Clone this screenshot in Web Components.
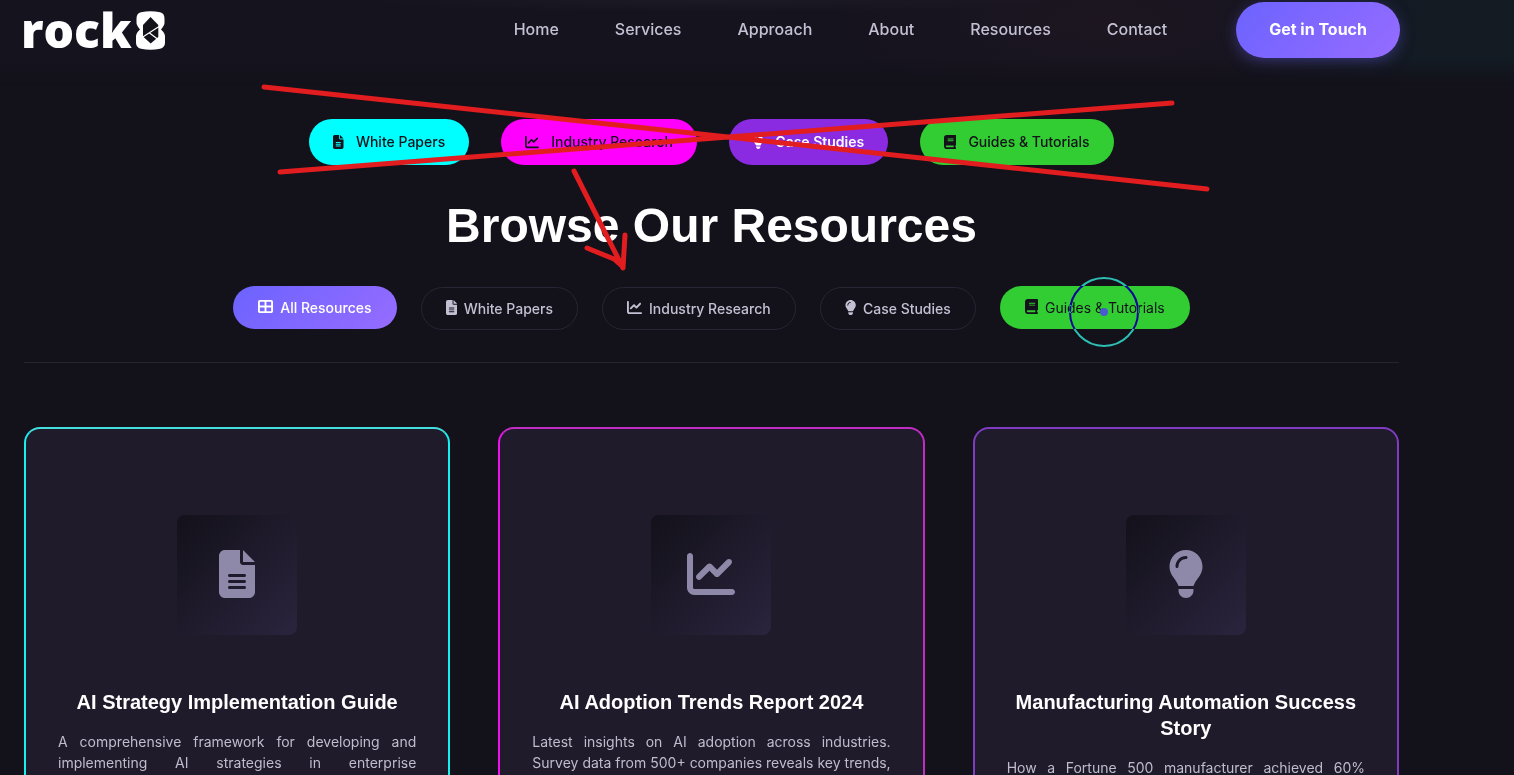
<!DOCTYPE html>
<html lang="en">
<head>
<meta charset="utf-8">
<title>rock8 – Resources</title>
<style>
  html, body { margin: 0; height: 100%; }
  body { background: #13111a; color: #fff; font-family: Inter, "Liberation Sans", sans-serif; overflow: hidden; }
</style>
</head>
<body>
<resources-page></resources-page>
<script>
const ICONS = {
  grid: [512, 'M448 96V224H288V96H448zm0 192V416H288V288H448zM224 224H64V96H224V224zM64 288H224V416H64V288zM64 32C28.7 32 0 60.7 0 96V416c0 35.3 28.7 64 64 64H448c35.3 0 64-28.7 64-64V96c0-35.3-28.7-64-64-64H64z'],
  file: [384, 'M64 0C28.7 0 0 28.7 0 64V448c0 35.3 28.7 64 64 64H320c35.3 0 64-28.7 64-64V160H256c-17.7 0-32-14.3-32-32V0H64zM256 0V128H384L256 0zM112 256H272c8.8 0 16 7.2 16 16s-7.2 16-16 16H112c-8.8 0-16-7.2-16-16s7.2-16 16-16zm0 64H272c8.8 0 16 7.2 16 16s-7.2 16-16 16H112c-8.8 0-16-7.2-16-16s7.2-16 16-16zm0 64H272c8.8 0 16 7.2 16 16s-7.2 16-16 16H112c-8.8 0-16-7.2-16-16s7.2-16 16-16z'],
  chart: [512, 'M64 64c0-17.7-14.3-32-32-32S0 46.3 0 64V400c0 44.2 35.8 80 80 80H480c17.7 0 32-14.3 32-32s-14.3-32-32-32H80c-8.8 0-16-7.2-16-16V64zm406.6 86.6c12.5-12.5 12.5-32.8 0-45.3s-32.8-12.5-45.3 0L320 210.7l-57.4-57.4c-12.5-12.5-32.8-12.5-45.3 0l-112 112c-12.5 12.5-12.5 32.8 0 45.3s32.8 12.5 45.3 0L240 221.3l57.4 57.4c12.5 12.5 32.8 12.5 45.3 0l128-128z'],
  bulb: [384, 'M272 384c9.6-31.9 29.5-59.1 49.2-86.2c5.2-7.1 10.4-14.2 15.4-21.4c19.8-28.5 31.4-63 31.4-100.3C368 78.8 289.2 0 192 0S16 78.8 16 176c0 37.3 11.6 71.9 31.4 100.3c5 7.2 10.2 14.3 15.4 21.4c19.8 27.1 39.7 54.4 49.2 86.2H272zM192 512c44.2 0 80-35.8 80-80V416H112v16c0 44.2 35.8 80 80 80zM112 176c0 8.8-7.2 16-16 16s-16-7.2-16-16c0-61.9 50.1-112 112-112c8.8 0 16 7.2 16 16s-7.2 16-16 16c-44.2 0-80 35.8-80 80z'],
  book: [448, 'M96 0C43 0 0 43 0 96V416c0 53 43 96 96 96H416c17.7 0 32-14.3 32-32s-14.3-32-32-32V384c17.7 0 32-14.3 32-32V32c0-17.7-14.3-32-32-32H96zm0 384H352v64H96c-17.7 0-32-14.3-32-32s14.3-32 32-32zm32-240c0-8.8 7.2-16 16-16H336c8.8 0 16 7.2 16 16s-7.2 16-16 16H144c-8.8 0-16-7.2-16-16zm16 48H336c8.8 0 16 7.2 16 16s-7.2 16-16 16H144c-8.8 0-16-7.2-16-16s7.2-16 16-16z']
};

function define(name, render) {
  customElements.define(name, class extends HTMLElement {
    constructor() { super(); this.attachShadow({ mode: 'open' }); }
    connectedCallback() { this.shadowRoot.innerHTML = render(this); }
  });
}

define('ui-icon', el => {
  const [w, d] = ICONS[el.getAttribute('name')];
  return `<style>
    :host { display: block; height: var(--icon-size, 14px); flex: none; }
    svg { display: block; height: 100%; fill: currentColor; }
  </style>
  <svg viewBox="0 0 ${w} 512" aria-hidden="true"><path fill-rule="evenodd" d="${d}"/></svg>`;
});

define('brand-logo', () => `<style>
    :host { display: block; margin-left: -3px; }
    a { display: flex; align-items: center; gap: 4px; height: 56px; color: #fff; text-decoration: none; font: 800 48px/56px "Open Sans", "Noto Sans", sans-serif; }
    svg { display: block; width: 29px; height: 39px; }
  </style>
  <a href="#home"><span>rock</span><svg viewBox="0 0 29 39" aria-hidden="true">
    <path fill="#fff" d="M5 1.2Q14.500-.8 24 1.200Q28.500 2.200 28.500 7.500V12Q28.500 14 25 18.500Q29 22 29 25.500V31.500Q29 36.500 24 37.800Q14.500 39.600 5 37.800Q0 36.500 0 31.500V25.500Q0 22 4 18.500Q.5 14 .5 12V7.500Q.5 2.200 5 1.200Z"/>
    <path fill="#13111a" d="M14.500 6L22.300 14V26L14.700 32.500L7 25.500V14Z"/>
    <path fill="none" stroke="#fff" stroke-width="1.2" d="M6 26.500L23 15.500M13.500 22L21.500 28"/>
  </svg></a>`);

define('site-header', () => `<style>
    :host { display: block; padding: 2px 114px 27px 24px;
      background:
        radial-gradient(ellipse 24% 12px at 47% 0, rgba(255,255,255,.03), transparent),
        radial-gradient(ellipse 18% 90px at 73% 20px, rgba(120,60,70,.08), transparent),
        linear-gradient(90deg, transparent 80%, rgba(14,44,46,.3) 94%),
        #15131e;
      -webkit-mask-image: linear-gradient(#000 70%, transparent); mask-image: linear-gradient(#000 70%, transparent); }
    header, nav { display: flex; align-items: center; }
    header { justify-content: space-between; }
    nav { gap: 56px; margin-left: auto; margin-right: 69px; }
    nav a { color: #c3c0d3; text-decoration: none; font: 500 16px/24px Inter, sans-serif; padding-bottom: 2px; }
    button { height: 56px; padding: 0 33px 2px; border: 0; border-radius: 28px; color: #fff; font: 700 16px/24px Inter, sans-serif;
      background: linear-gradient(135deg, #6c63ff, #966cff); box-shadow: 0 4px 15px rgba(108,99,255,.35); }
  </style>
  <header>
    <brand-logo></brand-logo>
    <nav aria-label="Main">
      <a href="#home">Home</a><a href="#services">Services</a><a href="#approach">Approach</a>
      <a href="#about">About</a><a href="#resources">Resources</a><a href="#contact">Contact</a>
    </nav>
    <button type="button">Get in Touch</button>
  </header>`);

define('category-pill', el => `<style>
    :host { display: block; }
    a { display: flex; align-items: center; gap: 12px; height: 46px; padding: 0 24px; border-radius: 23px;
      background: var(--pill); color: var(--ink, #13111a); text-decoration: none; font: var(--weight, 500) 14px/24px Inter, sans-serif; }
  </style>
  <a href="#${el.getAttribute('icon')}"><ui-icon name="${el.getAttribute('icon')}"></ui-icon><slot></slot></a>`);

define('filter-pill', el => `<style>
    :host { display: block; }
    button { display: flex; align-items: center; gap: 7px; height: 43px; padding: 0 24px; border-radius: 22px;
      border: 1px solid #282535; background: transparent; color: #c3c0d3; font: 500 14px/24px Inter, sans-serif; white-space: nowrap; --icon-size: 15px; }
    ui-icon { margin-bottom: 2px; }
    :host([kind]) { margin-bottom: 2px; }
    :host([kind]) button { border-color: transparent; background-origin: border-box; }
    :host([kind="active"]) button { color: #fff; background-image: linear-gradient(135deg, #6c63ff, #966cff); }
    :host([kind="guides"]) button { color: #13111a; background-color: #32cd32; font-weight: 400; }
  </style>
  <button type="button"><ui-icon name="${el.getAttribute('icon')}"></ui-icon><slot></slot></button>`);

define('resource-card', el => `<style>
    :host { display: block; min-width: 0; }
    article { box-sizing: border-box; height: 100%; padding: 32px; border: 2px solid var(--edge); border-top-color: var(--edge-top); border-right-color: var(--edge-right); border-radius: 16px; background: #1f1b2b; }
    .art { box-sizing: border-box; display: grid; place-items: center; width: 120px; height: 120px; margin: 54px auto; padding-bottom: 2px; border-radius: 8px;
      background: linear-gradient(135deg, #13111a, #2a243d); color: #8e88a9; --icon-size: 48px; }
    h3 { margin: 0 0 16px; text-align: center; font: 700 20px/26px "Liberation Sans", Arial, sans-serif; color: #fff; }
    p { margin: 0; color: #bfbccd; font: 400 14px/21px Inter, sans-serif; text-align: justify; text-align-last: justify; }
  </style>
  <article>
    <div class="art"><ui-icon name="${el.getAttribute('icon')}"></ui-icon></div>
    <h3><slot name="title"></slot></h3>
    <p><slot></slot></p>
  </article>`);

define('review-marks', () => `<style>
    :host { position: absolute; top: 0; left: 0; pointer-events: none; }
    svg { display: block; width: 1240px; height: 300px; }
  </style>
  <svg viewBox="0 0 1240 300" aria-hidden="true" fill="none" stroke="#e21d1f" stroke-width="5" stroke-linecap="round" stroke-linejoin="round">
    <path d="M264 87L728 137L1207 189M280 172L728 137L1172 103"/>
    <path d="M574 171L623 268L625 235M587 248L614 259L623 267"/>
  </svg>`);

define('cursor-ring', () => `<style>
    :host { position: absolute; top: 277px; left: 1069px; box-sizing: border-box; width: 70px; height: 70px; border: 2px solid #40d0ce; border-radius: 50%; mix-blend-mode: difference; pointer-events: none; }
  </style>`);

define('cursor-dot', () => `<style>
    :host { position: absolute; top: 308px; left: 1100px; width: 8px; height: 8px; border-radius: 50%; background: #485bd0; pointer-events: none; }
  </style>`);

define('resources-page', () => `<style>
    :host { display: block; height: 100%; overflow: hidden; }
    main { padding: 34px 115px 0 24px; }
    .row { display: flex; justify-content: center; }
    .categories { gap: 32px; }
    .filters { gap: 24px; align-items: center; padding-bottom: 31px; border-bottom: 1px solid #262332; }
    h2 { margin: 31px 0 30px; text-align: center; font: 700 48px/60px "Liberation Sans", Arial, sans-serif; }
    .cards { display: grid; grid-template-columns: repeat(3, minmax(0, 1fr)); gap: 48px; margin-top: 64px; min-height: 400px; }
  </style>
  <site-header></site-header>
  <main>
    <div class="row categories">
      <category-pill icon="file" style="--pill:#0ff">White Papers</category-pill>
      <category-pill icon="chart" style="--pill:#f0f">Industry Research</category-pill>
      <category-pill icon="bulb" style="--pill:#8a2be2;--ink:#fff;--weight:600">Case Studies</category-pill>
      <category-pill icon="book" style="--pill:#32cd32">Guides &amp; Tutorials</category-pill>
    </div>
    <h2>Browse Our Resources</h2>
    <div class="row filters">
      <filter-pill icon="grid" kind="active">All Resources</filter-pill>
      <filter-pill icon="file">White Papers</filter-pill>
      <filter-pill icon="chart">Industry Research</filter-pill>
      <filter-pill icon="bulb">Case Studies</filter-pill>
      <filter-pill icon="book" kind="guides">Guides &amp; Tutorials</filter-pill>
    </div>
    <div class="cards">
      <resource-card icon="file" style="--edge:#18f0f0;--edge-top:#43dede;--edge-right:#18f0f0"><span slot="title">AI Strategy Implementation Guide</span>A comprehensive framework for developing and implementing AI strategies in enterprise</resource-card>
      <resource-card icon="chart" style="--edge:#f010f0;--edge-top:#c02cc4;--edge-right:#c02cc4"><span slot="title">AI Adoption Trends Report 2024</span>Latest insights on AI adoption across industries. Survey data from 500+ companies reveals key trends,</resource-card>
      <resource-card icon="bulb" style="--edge:#7f3cc2;--edge-top:#7f3cc2;--edge-right:#7f3cc2"><span slot="title">Manufacturing Automation Success Story</span>How a Fortune 500 manufacturer achieved 60%</resource-card>
    </div>
  </main>
  <review-marks></review-marks>
  <cursor-ring></cursor-ring>
  <cursor-dot></cursor-dot>`);
</script>
</body>
</html>
